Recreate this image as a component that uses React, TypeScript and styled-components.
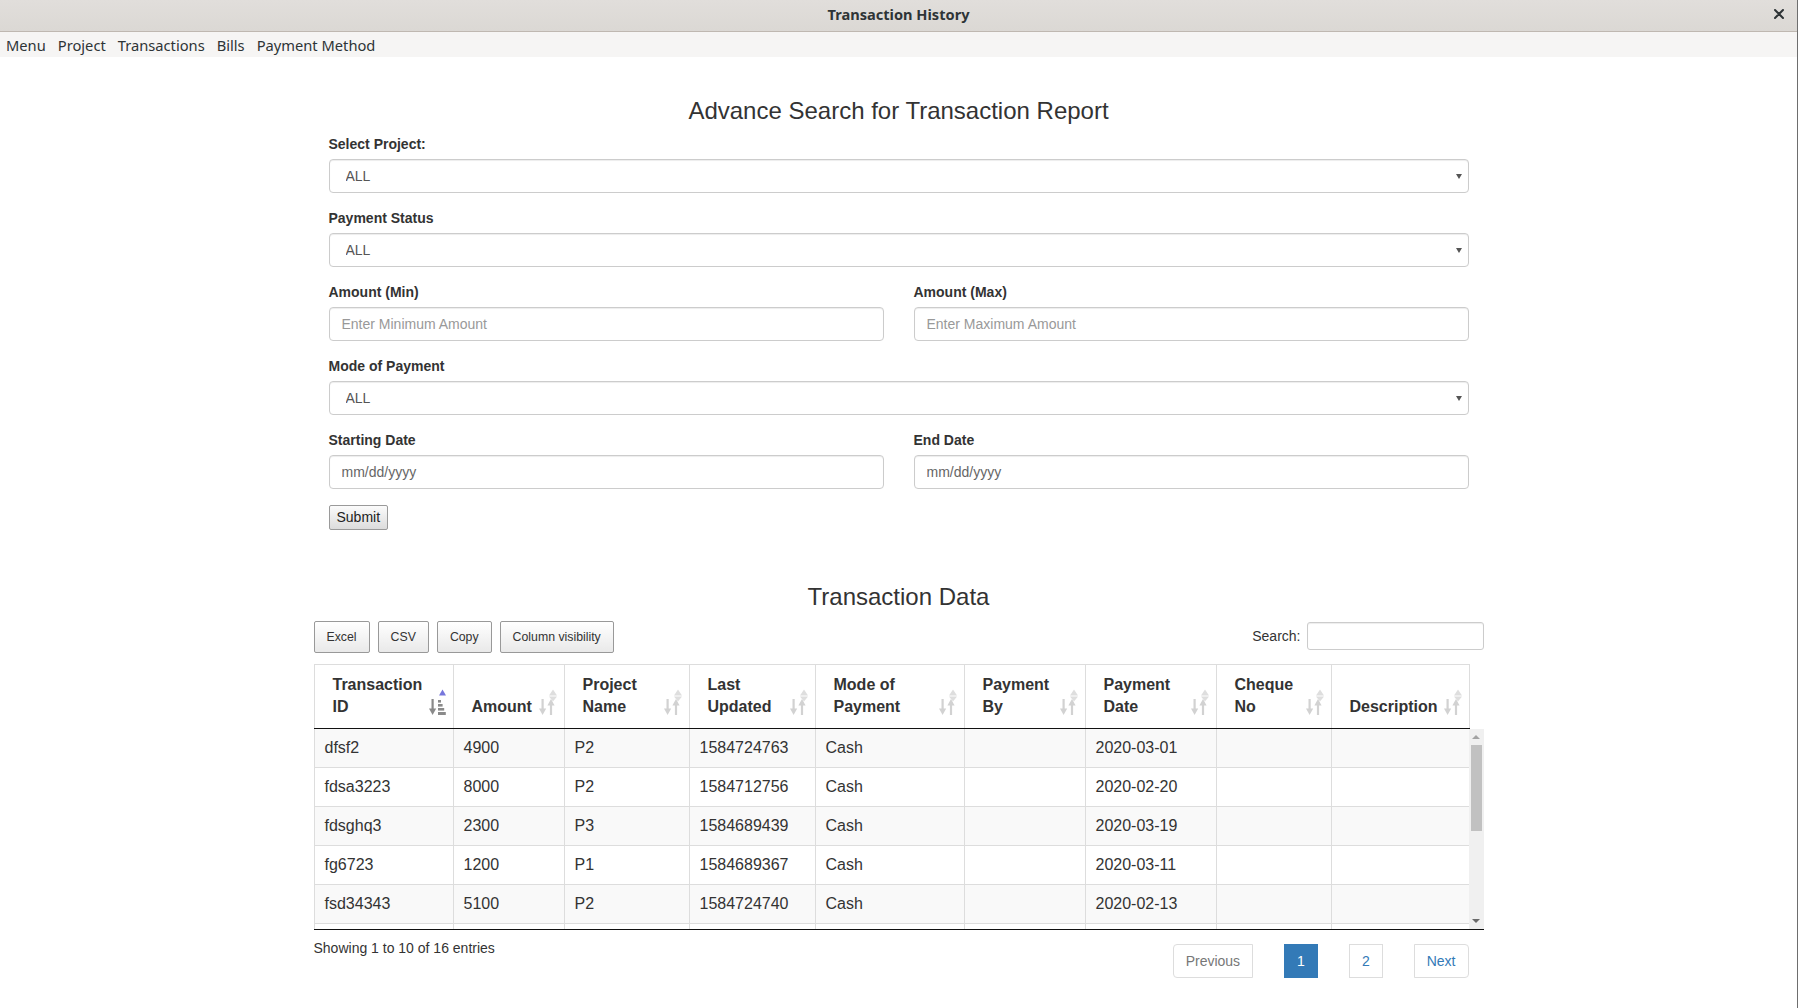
import React from 'react'
import styled, { createGlobalStyle } from 'styled-components'

const GlobalStyle = createGlobalStyle`
  html, body {
    margin: 0;
    padding: 0;
    background: #fff;
  }
  body {
    font-family: "Liberation Sans", Arial, sans-serif;
    font-size: 14px;
    color: #333;
  }
  * {
    box-sizing: border-box;
  }
`

const columns = [
    { title: 'Transaction ID', width: 139, sorted: true },
    { title: 'Amount', width: 111 },
    { title: 'Project Name', width: 125 },
    { title: 'Last Updated', width: 126 },
    { title: 'Mode of Payment', width: 149 },
    { title: 'Payment By', width: 121 },
    { title: 'Payment Date', width: 131 },
    { title: 'Cheque No', width: 115 },
    { title: 'Description', width: 138 },
]

// only the rows that show inside the scroll body
const rows = [
    ['dfsf2', '4900', 'P2', '1584724763', 'Cash', '', '2020-03-01', '', ''],
    ['fdsa3223', '8000', 'P2', '1584712756', 'Cash', '', '2020-02-20', '', ''],
    ['fdsghq3', '2300', 'P3', '1584689439', 'Cash', '', '2020-03-19', '', ''],
    ['fg6723', '1200', 'P1', '1584689367', 'Cash', '', '2020-03-11', '', ''],
    ['fsd34343', '5100', 'P2', '1584724740', 'Cash', '', '2020-02-13', '', ''],
    ['', '', '', '', '', '', '', '', ''],
]

export default function App() {
    return (
        <Window>
            <GlobalStyle />
            <TitleBar>
                <span />
                <WindowTitle>Transaction History</WindowTitle>
                <CloseButton aria-label="close">
                    <svg width="10" height="10" viewBox="0 0 10 10">
                        <path d="M1 1 L9 9 M9 1 L1 9" stroke="#2e3436" strokeWidth="2" strokeLinecap="round" />
                    </svg>
                </CloseButton>
            </TitleBar>
            <MenuBar>
                {['Menu', 'Project', 'Transactions', 'Bills', 'Payment Method'].map((m) => (
                    <MenuItem key={m}>{m}</MenuItem>
                ))}
            </MenuBar>

            <Main>
                <Container>
                    <SearchForm>
                        <Heading>Advance Search for Transaction Report</Heading>
                        <FormGroup>
                            <FieldLabel>Select Project:</FieldLabel>
                            <SelectWrap>
                                <SelectControl defaultValue="ALL">
                                    <option>ALL</option>
                                </SelectControl>
                            </SelectWrap>
                        </FormGroup>
                        <FormGroup>
                            <FieldLabel>Payment Status</FieldLabel>
                            <SelectWrap>
                                <SelectControl defaultValue="ALL">
                                    <option>ALL</option>
                                </SelectControl>
                            </SelectWrap>
                        </FormGroup>
                        <TwoCols>
                            <FormGroup>
                                <FieldLabel>Amount (Min)</FieldLabel>
                                <Control placeholder="Enter Minimum Amount" />
                            </FormGroup>
                            <FormGroup>
                                <FieldLabel>Amount (Max)</FieldLabel>
                                <Control placeholder="Enter Maximum Amount" />
                            </FormGroup>
                        </TwoCols>
                        <FormGroup>
                            <FieldLabel>Mode of Payment</FieldLabel>
                            <SelectWrap>
                                <SelectControl defaultValue="ALL">
                                    <option>ALL</option>
                                </SelectControl>
                            </SelectWrap>
                        </FormGroup>
                        <TwoCols>
                            <FormGroup>
                                <FieldLabel>Starting Date</FieldLabel>
                                <Control $date placeholder="mm/dd/yyyy" />
                            </FormGroup>
                            <FormGroup>
                                <FieldLabel>End Date</FieldLabel>
                                <Control $date placeholder="mm/dd/yyyy" />
                            </FormGroup>
                        </TwoCols>
                        <SubmitButton>Submit</SubmitButton>
                    </SearchForm>

                    <Heading $top={54}>Transaction Data</Heading>
                    <Toolbar>
                        <ExportButtons>
                            <ExportButton>Excel</ExportButton>
                            <ExportButton>CSV</ExportButton>
                            <ExportButton>Copy</ExportButton>
                            <ExportButton>Column visibility</ExportButton>
                        </ExportButtons>
                        <SearchBox>
                            Search:
                            <SearchInput />
                        </SearchBox>
                    </Toolbar>

                    <HeadTable>
                        <colgroup>
                            {columns.map((c) => <col key={c.title} style={{ width: c.width }} />)}
                        </colgroup>
                        <thead>
                            <tr>
                                {columns.map((c) => (
                                    <Th key={c.title}>
                                        {c.title}
                                        <SortIcon sorted={c.sorted} />
                                    </Th>
                                ))}
                            </tr>
                        </thead>
                    </HeadTable>

                    <ScrollArea>
                        <BodyViewport>
                            <BodyTable>
                                <colgroup>
                                    {columns.map((c) => <col key={c.title} style={{ width: c.width }} />)}
                                </colgroup>
                                <tbody>
                                    {rows.map((r, i) => (
                                        <Tr key={i} $odd={i % 2 === 0}>
                                            {r.map((v, j) => <Td key={j}>{v}</Td>)}
                                        </Tr>
                                    ))}
                                </tbody>
                            </BodyTable>
                        </BodyViewport>
                        <Scrollbar>
                            <ScrollArrow />
                            <ScrollThumb />
                            <ScrollSpacer />
                            <ScrollArrow $down />
                        </Scrollbar>
                    </ScrollArea>

                    <Footer>
                        <Info>Showing 1 to 10 of 16 entries</Info>
                        <Pagination>
                            <PageButton $variant="disabled" $edge="left">Previous</PageButton>
                            <PageButton $variant="active">1</PageButton>
                            <PageButton>2</PageButton>
                            <PageButton $edge="right">Next</PageButton>
                        </Pagination>
                    </Footer>
                </Container>
            </Main>
        </Window>
    )
}

function SortIcon({ sorted }: { sorted?: boolean }) {
    if (sorted) {
        return (
            <SortSvg viewBox="0 0 20 30">
                <path d="M13 6.5 L16.5 0.5 L20 6.5 Z" fill="#7676dc" />
                <rect x="5.5" y="10" width="2.2" height="11" fill="#8a8a8a" />
                <path d="M3 19.5 L10.2 19.5 L6.6 26 Z" fill="#8a8a8a" />
                <rect x="12" y="11" width="3" height="2.6" fill="#8a8a8a" />
                <rect x="12" y="15" width="4.6" height="2.6" fill="#8a8a8a" />
                <rect x="12" y="19" width="6.2" height="2.6" fill="#8a8a8a" />
                <rect x="12" y="23" width="7.8" height="3" fill="#8a8a8a" />
            </SortSvg>
        )
    }
    return (
        <SortSvg viewBox="0 0 20 30">
            <rect x="4.5" y="10" width="2.2" height="11" fill="#d2d2d2" />
            <path d="M2 19.5 L9.2 19.5 L5.6 26 Z" fill="#d2d2d2" />
            <rect x="12.9" y="15" width="2.2" height="11" fill="#d2d2d2" />
            <path d="M10.4 16.5 L17.6 16.5 L14 10 Z" fill="#d2d2d2" />
            <path d="M12 6.5 L16 0.5 L20 6.5 Z" fill="#dedede" />
            <path d="M12 7.5 L20 7.5 L16 12.5 Z" fill="#dedede" />
        </SortSvg>
    )
}

const Window = styled.div`
    height: 1008px;
    overflow: hidden;
    display: flex;
    flex-direction: column;
    border-right: 1px solid #6e6e6e;
`

const TitleBar = styled.header`
    height: 32px;
    display: grid;
    grid-template-columns: 1fr auto 1fr;
    align-items: center;
    background: linear-gradient(#e1dedb, #dbd8d4);
    border-bottom: 1px solid #bfb8b1;
    font-family: "Noto Sans", "DejaVu Sans", sans-serif;
`

const WindowTitle = styled.div`
    font-size: 14.6px;
    font-weight: bold;
    color: #2e3436;
    margin-top: -3px;
`

const CloseButton = styled.div`
    justify-self: end;
    display: flex;
    margin-right: 13px;
    margin-top: -4px;
`

const MenuBar = styled.nav`
    height: 25px;
    display: flex;
    align-items: center;
    background: #f6f5f4;
    font-family: "Noto Sans", "DejaVu Sans", sans-serif;
    font-size: 14.7px;
    color: #2e3436;
`

const MenuItem = styled.span`
    padding: 0 6px;
`

const Main = styled.main`
    flex: 1;
    padding-top: 21px;
`

const Container = styled.div`
    width: 1170px;
    margin: 0 auto;
`

const SearchForm = styled.form`
    padding: 0 15px;
`

const Heading = styled.h3<{ $top?: number }>`
    margin: ${(p) => p.$top ?? 20}px 0 10px;
    font-size: 24px;
    font-weight: 500;
    line-height: 1.1;
    text-align: center;
    color: #333;
`

const FormGroup = styled.div`
    margin-bottom: 15px;
`

const FieldLabel = styled.label`
    display: block;
    margin-bottom: 5px;
    font-weight: bold;
    line-height: 20px;
`

const TwoCols = styled.div`
    display: grid;
    grid-template-columns: 1fr 1fr;
    column-gap: 30px;
`

const Control = styled.input<{ $date?: boolean }>`
    display: block;
    width: 100%;
    height: 34px;
    padding: 6px 12px;
    font-family: inherit;
    font-size: 14px;
    line-height: 20px;
    color: #555;
    background: #fff;
    border: 1px solid #ccc;
    border-radius: 4px;
    box-shadow: inset 0 1px 1px rgba(0, 0, 0, 0.075);
    outline: none;

    &::placeholder {
        color: ${(p) => (p.$date ? '#666' : '#999')};
    }
`

const SelectWrap = styled.div`
    position: relative;

    &::after {
        content: '';
        position: absolute;
        right: 7px;
        top: 15px;
        border-left: 3.5px solid transparent;
        border-right: 3.5px solid transparent;
        border-top: 5px solid #555;
        pointer-events: none;
    }
`

const SelectControl = styled.select`
    display: block;
    width: 100%;
    height: 34px;
    padding: 6px 12px 6px 16px;
    appearance: none;
    font-family: inherit;
    font-size: 14px;
    color: #555;
    background: #fff;
    border: 1px solid #ccc;
    border-radius: 4px;
    box-shadow: inset 0 1px 1px rgba(0, 0, 0, 0.075);
    outline: none;
`

const SubmitButton = styled.button`
    display: block;
    margin-top: 1px;
    padding: 3px 7px;
    font-family: inherit;
    font-size: 14px;
    line-height: 17px;
    color: #222;
    background: linear-gradient(#fbfbfb, #dcdcdc);
    border: 1px solid #9a9a9a;
    border-radius: 2px;
`

const Toolbar = styled.div`
    display: flex;
    justify-content: space-between;
    align-items: center;
`

const ExportButtons = styled.div`
    display: flex;
    gap: 8px;
`

const ExportButton = styled.button`
    padding: 6px 12px;
    font-family: inherit;
    font-size: 12.3px;
    line-height: 18px;
    color: #333;
    background: linear-gradient(#fff 0%, #e9e9e9 100%);
    border: 1px solid #999;
    border-radius: 2px;
`

const SearchBox = styled.label`
    display: flex;
    align-items: center;
    gap: 6px;
    margin-top: -2px;
    font-size: 14px;
`

const SearchInput = styled.input`
    width: 177px;
    height: 28px;
    padding: 4px 8px;
    border: 1px solid #ccc;
    border-radius: 3px;
    box-shadow: inset 0 1px 1px rgba(0, 0, 0, 0.075);
    outline: none;
`

const HeadTable = styled.table`
    margin-top: 11px;
    width: 1155px;
    table-layout: fixed;
    border-collapse: collapse;
`

const Th = styled.th`
    position: relative;
    padding: 9px 28px 10px 18px;
    font-size: 16px;
    font-weight: bold;
    line-height: 22px;
    text-align: left;
    vertical-align: bottom;
    color: #333;
    border: 1px solid #ddd;
    border-bottom: 1px solid #111;
`

const SortSvg = styled.svg`
    position: absolute;
    right: 7px;
    bottom: 9px;
    width: 20px;
    height: 30px;
`

const ScrollArea = styled.div`
    display: flex;
    height: 201px;
    border-bottom: 1px solid #111;
`

const BodyViewport = styled.div`
    width: 1155px;
    height: 200px;
    overflow: hidden;
`

const BodyTable = styled.table`
    width: 1155px;
    table-layout: fixed;
    border-collapse: collapse;
`

const Tr = styled.tr<{ $odd?: boolean }>`
    background: ${(p) => (p.$odd ? '#f9f9f9' : '#fff')};
`

const Td = styled.td`
    height: 39px;
    padding: 8px 10px;
    font-size: 16px;
    line-height: 22px;
    color: #333;
    border: 1px solid #ddd;
    border-top: 0;
    white-space: nowrap;
`

const Scrollbar = styled.div`
    width: 15px;
    height: 200px;
    display: flex;
    flex-direction: column;
    align-items: center;
    background: #f0f0f0;
`

const ScrollArrow = styled.div<{ $down?: boolean }>`
    width: 0;
    height: 0;
    margin: ${(p) => (p.$down ? '0 0 6px' : '6px 0 0')};
    border-left: 4px solid transparent;
    border-right: 4px solid transparent;
    ${(p) => (p.$down ? 'border-top: 4px solid #6a6a6a;' : 'border-bottom: 4px solid #a3a3a3;')}
`

const ScrollThumb = styled.div`
    width: 11px;
    height: 86px;
    margin-top: 6px;
    background: #c1c1c1;
`

const ScrollSpacer = styled.div`
    flex: 1;
`

const Footer = styled.div`
    display: flex;
    justify-content: space-between;
    align-items: flex-start;
    padding: 8px 15px 0 0;
`

const Info = styled.div`
    font-size: 14px;
    line-height: 20px;
    color: #333;
`

const Pagination = styled.div`
    display: flex;
    gap: 31px;
    margin-top: 6px;
`

const PageButton = styled.span<{ $variant?: 'disabled' | 'active'; $edge?: 'left' | 'right' }>`
    padding: 6px 12px;
    font-size: 14px;
    line-height: 20px;
    border: 1px solid ${(p) => (p.$variant === 'active' ? '#337ab7' : '#ddd')};
    background: ${(p) => (p.$variant === 'active' ? '#337ab7' : '#fff')};
    color: ${(p) => (p.$variant === 'active' ? '#fff' : p.$variant === 'disabled' ? '#777' : '#337ab7')};
    border-radius: ${(p) => (p.$edge === 'left' ? '4px 0 0 4px' : p.$edge === 'right' ? '0 4px 4px 0' : '0')};
`
